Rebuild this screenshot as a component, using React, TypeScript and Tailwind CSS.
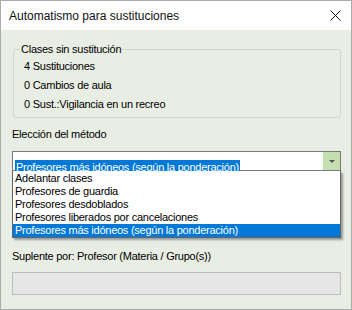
const ui = "font-['Liberation_Sans',Arial,sans-serif]";
const small = `${ui} text-[11px] tracking-[-0.25px] text-black`;

const methods = [
  "Adelantar clases",
  "Profesores de guardia",
  "Profesores desdoblados",
  "Profesores liberados por cancelaciones",
  "Profesores más idóneos (según la ponderación)",
];

function CloseIcon() {
  return (
    <svg width="11" height="11" viewBox="0 0 11 11" className="block">
      <path d="M0.5 0.5 L10.5 10.5 M10.5 0.5 L0.5 10.5" stroke="#111" strokeWidth="1" fill="none" />
    </svg>
  );
}

export default function App() {
  const selected = methods.length - 1;

  return (
    <div className="w-[352px] h-[310px] border border-[#acacac] bg-[#e9eee4] flex flex-col overflow-hidden">
      {/* title bar */}
      <div className="h-[29px] bg-white flex items-center justify-between pl-[8px] pr-[10px] shrink-0">
        <span className={`${ui} text-[12px] text-[#111] pt-[1px]`}>Automatismo para sustituciones</span>
        <CloseIcon />
      </div>

      <div className="flex flex-col">
        <fieldset className="ml-[12px] mt-[12px] w-[328px] border border-[#d3d6d0] rounded-[3px] pl-[6px] pb-[3px]">
          <legend className={`${small} px-[1px] leading-[14px]`}>Clases sin sustitución</legend>
          <div className="pt-[1px] pl-[4px] flex flex-col">
            <div className={`${small} h-[19px] leading-[19px]`}>4 Sustituciones</div>
            <div className={`${small} h-[19px] leading-[19px]`}>0 Cambios de aula</div>
            <div className={`${small} h-[19px] leading-[19px]`}>0 Sust.:Vigilancia en un recreo</div>
          </div>
        </fieldset>

        <div className={`${small} ml-[11px] mt-[9px] h-[14px] leading-[14px]`}>Elección del método</div>

        <div className="relative ml-[11px] mt-[10px] w-[329px]">
          <div className="h-[20px] border border-[#7a7a7a] bg-white flex">
            <div className="flex-1 pl-[2px] pt-[1px]">
              <span className={`${small} inline-block h-[15px] leading-[15px] px-[1px] bg-[#0078d7] text-white`}>
                {methods[selected]}
              </span>
            </div>
            <div className="w-[17px] h-full bg-[#c4dfb0] flex items-center justify-center">
              <svg width="6" height="3" viewBox="0 0 6 3" className="block">
                <path d="M0 0 H6 L3 3 Z" fill="#555" />
              </svg>
            </div>
          </div>

          <div className="absolute left-0 top-full w-full bg-white border-x border-b border-[#646464] pt-[1px] shadow-[2px_2px_2px_rgba(0,0,0,0.35)]">
            {methods.map((m, i) => (
              <div
                key={m}
                className={`${small} h-[13px] leading-[13px] pl-[2px] ${i === selected ? "bg-[#0078d7] text-white" : ""}`}
              >
                {m}
              </div>
            ))}
          </div>
        </div>

        <div className={`${small} ml-[11px] mt-[78px] h-[14px] leading-[14px]`}>Suplente por: Profesor (Materia / Grupo(s))</div>

        <div className="ml-[11px] mt-[9px] w-[329px] h-[23px] border border-[#bcbcbc] bg-[#e6e6e6]" />
      </div>
    </div>
  );
}
